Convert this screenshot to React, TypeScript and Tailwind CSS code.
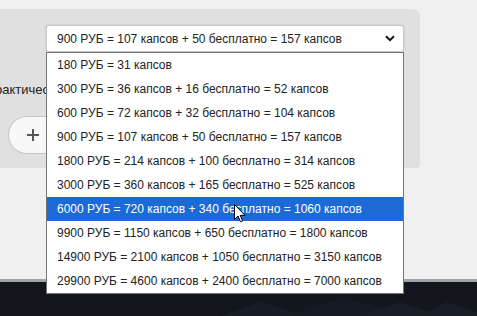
import React from "react";

const options = [
  "180 РУБ = 31 капсов",
  "300 РУБ = 36 капсов + 16 бесплатно = 52 капсов",
  "600 РУБ = 72 капсов + 32 бесплатно = 104 капсов",
  "900 РУБ = 107 капсов + 50 бесплатно = 157 капсов",
  "1800 РУБ = 214 капсов + 100 бесплатно = 314 капсов",
  "3000 РУБ = 360 капсов + 165 бесплатно = 525 капсов",
  "6000 РУБ = 720 капсов + 340 бесплатно = 1060 капсов",
  "9900 РУБ = 1150 капсов + 650 бесплатно = 1800 капсов",
  "14900 РУБ = 2100 капсов + 1050 бесплатно = 3150 капсов",
  "29900 РУБ = 4600 капсов + 2400 бесплатно = 7000 капсов",
];

const hovered = 6;

function Cursor() {
  return (
    <svg width="12" height="19" viewBox="0 0 12 19" className="absolute left-[234px] top-[204px]">
      <path
        d="M0.5 0.5 L0.5 15.5 L4 12 L6.5 17.8 L8.6 16.9 L6.2 11.3 L11 11.3 Z"
        fill="#ffffff"
        stroke="#000000"
        strokeWidth="1"
      />
    </svg>
  );
}

export default function App() {
  return (
    <div className="relative w-[477px] h-[316px] overflow-hidden bg-[#f0f0f0] font-['Liberation_Sans',Arial,sans-serif] text-[12px] text-[#222]">
      {/* top area */}
      <div className="h-[279px] pt-[9px]">
        <div className="w-[420px] h-[159px] bg-[#e0e0e0] rounded-tr-[8px] rounded-br-[4px] pt-[16px]">
          <div className="ml-[46px] w-[358px] h-[27px] bg-white border border-[#c9c9c9] rounded-[3px] flex items-center justify-between pl-[10px] pr-[8px] shadow-[0_0_2px_rgba(120,150,200,0.5)]">
            <span className="whitespace-nowrap">{options[3]}</span>
            <svg width="10" height="7" viewBox="0 0 10 7">
              <path d="M1 1.2 L5 5.2 L9 1.2" fill="none" stroke="#111" strokeWidth="2" />
            </svg>
          </div>

          <div className="mt-[30px] -ml-[12px] leading-[15px] whitespace-nowrap text-[13px]">практически</div>

          <div className="mt-[19px] ml-[8px] w-[80px] h-[38px] rounded-l-[19px] bg-[#f7f7f7] border border-[#c4c4c4] flex items-center pl-[17px]">
            <svg width="14" height="14" viewBox="0 0 14 14">
              <path d="M7 1 V13 M1 7 H13" stroke="#555" strokeWidth="2" />
            </svg>
          </div>
        </div>
      </div>

      {/* footer */}
      <div className="h-[3px] bg-[#a0a3aa]" />
      <div className="h-[34px] bg-[#13161d] relative">
        <svg width="477" height="34" viewBox="0 0 477 34" className="absolute inset-0">
          <polygon points="220,34 262,20 304,34" fill="#181c24" />
          <polygon points="292,34 318,22 345,18 372,22 398,34" fill="#161a23" />
          <polygon points="358,34 400,20 442,34" fill="#191d25" />
          <polygon points="420,34 447,20 477,30 477,34" fill="#191d25" />
        </svg>
      </div>

      {/* open dropdown list */}
      <div className="absolute left-[46px] top-[52px] w-[358px] bg-white border border-[#767676]">
        {options.map((o, i) => (
          <div
            key={o}
            className={
              i === hovered
                ? "h-[24px] flex items-center pl-[10px] whitespace-nowrap bg-[#1b6ad6] text-white"
                : "h-[24px] flex items-center pl-[10px] whitespace-nowrap"
            }
          >
            {o}
          </div>
        ))}
      </div>

      <Cursor />
    </div>
  );
}
